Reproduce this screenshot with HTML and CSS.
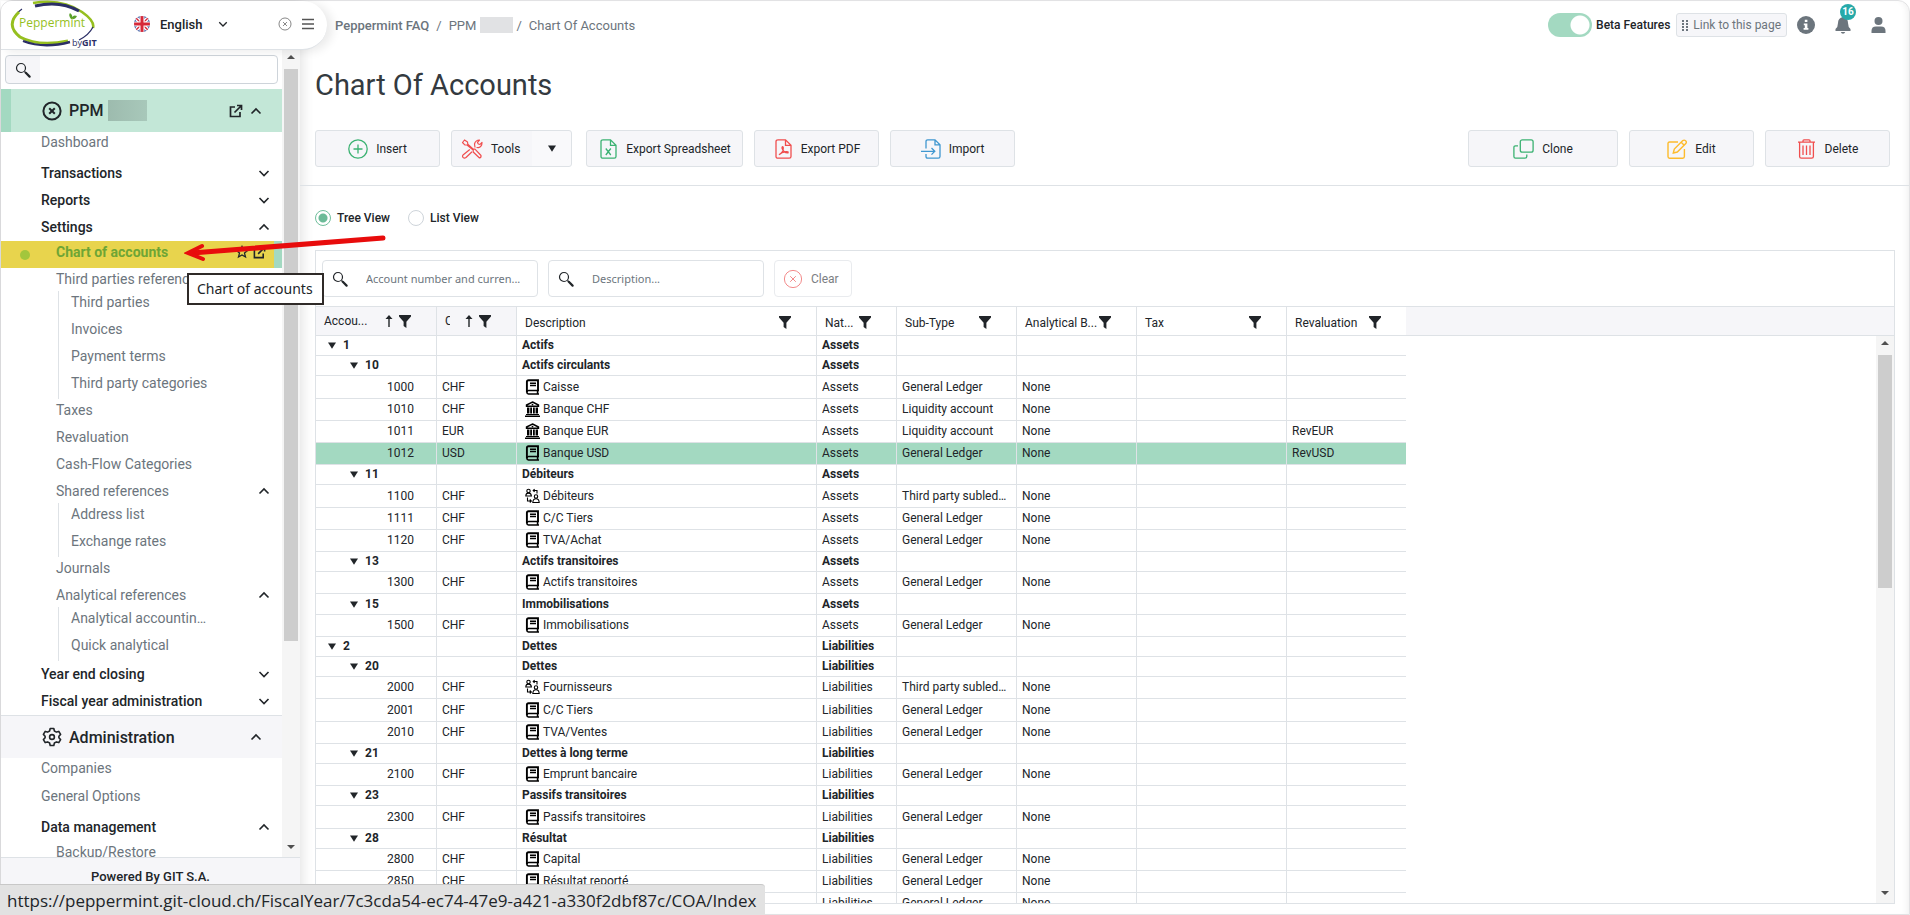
FILE: index.html
```html
<!DOCTYPE html>
<html lang="en">

<head>
  <meta charset="utf-8">
  <title>Chart Of Accounts</title>
  <link rel="stylesheet" href="styles.css">
</head>

<body>
  <svg class="sprite" aria-hidden="true">
    <symbol id="i-search" viewBox="0 0 16 16" fill="none" stroke="currentColor"><circle cx="6" cy="6" r="4.5" stroke-width="1.2"/><path d="M9.5 9.5L11 11" stroke-width="1.2"/><path d="M10.8 10.8L14.6 14.6" stroke-width="2.2" stroke-linecap="round"/></symbol>
    <symbol id="i-down" viewBox="0 0 12 12" fill="none" stroke="currentColor" stroke-width="1.6"><path d="M1.5 4L6 8.5L10.5 4"/></symbol>
    <symbol id="i-up" viewBox="0 0 12 12" fill="none" stroke="currentColor" stroke-width="1.6"><path d="M1.5 8.5L6 4L10.5 8.5"/></symbol>
    <symbol id="i-cx" viewBox="0 0 20 20" fill="none" stroke="currentColor"><circle cx="10" cy="10" r="8.6"/><path d="M7.2 7.2L12.8 12.8M12.8 7.2L7.2 12.8"/></symbol>
    <symbol id="i-ext" viewBox="0 0 14 14" fill="none" stroke="currentColor" stroke-width="1.7"><path d="M6 3H1.5V12.5H11V8M8 1.5H12.5V6M12.5 1.5L5.5 8.5"/></symbol>
    <symbol id="i-filter" viewBox="0 0 12 13"><path d="M0 0H12V1.5L7.4 6.8V13L4.6 11V6.8L0 1.5Z" fill="currentColor"/></symbol>
    <symbol id="i-sort" viewBox="0 0 8 12"><path d="M4 0L7.5 4H4.7V12H3.3V4H0.5Z" fill="currentColor"/></symbol>
    <symbol id="i-tri" viewBox="0 0 8 7"><path d="M0 0.5H8L4 6.8Z" fill="currentColor"/></symbol>
    <symbol id="i-book" viewBox="0 0 15 16" fill="none" stroke="#000"><path d="M13 11.5V1.2H3.5Q1.9 1.2 1.9 2.8V13.2" stroke-width="1.9"/><path d="M14 11.5H3.5Q1.9 11.5 1.9 13.2T3.5 15H14M12.6 11.5V15" stroke-width="1.6"/><path d="M5 4.2H11M5 6.6H11" stroke-width="1.5"/></symbol>
    <symbol id="i-bank" viewBox="0 0 15 16"><path d="M7.5 1L13.5 4V5.3H1.5V4Z" fill="none" stroke="#000" stroke-width="1.4"/><circle cx="7.5" cy="3.6" r="0.9"/><path d="M2 6.5H4.4V12.5H2ZM5.2 6.5H7V12.5H5.2ZM8 6.5H9.8V12.5H8ZM10.6 6.5H13V12.5H10.6ZM1 13H14V14H1ZM0 14.6H15V16H0Z"/></symbol>
    <symbol id="i-third" viewBox="0 0 15 15" fill="none" stroke="#000" stroke-width="1.1"><circle cx="3.5" cy="2.5" r="1.7"/><path d="M0.8 7.5Q0.8 4.6 3.5 4.6T6.4 7.5ZM12 5V2H8.2M9.6 0.6L8.2 2L9.6 3.4M2.5 9V12.5H6M4.8 11L6.3 12.5L4.8 14"/><circle cx="11" cy="8" r="1.7"/><path d="M7.8 14Q8 10.2 11 10.2T14.2 14Z"/></symbol>
  </svg>

  <div class="page">
    <aside class="sidebar">
      <header class="brand">
        <svg class="logo" viewBox="0 0 90 48" aria-label="Peppermint by GIT">
          <path d="M25 3Q54 -2 74 12Q87 21 85 28" fill="none" stroke="#96bf1f" stroke-width="2.6"/>
          <path d="M27 6Q52 0 71 11" fill="none" stroke="#2b2e66" stroke-width="3"/>
          <path d="M85 27Q81 35 71 40" fill="none" stroke="#2b2e66" stroke-width="1.2"/>
          <path d="M14 9Q7 14 5 20" fill="none" stroke="#2b2e66" stroke-width="1.2"/>
          <path d="M11 12Q-3 25 12 37Q30 47 60 41" fill="none" stroke="#96bf1f" stroke-width="3"/>
          <path d="M15 41Q36 49 62 42" fill="none" stroke="#2b2e66" stroke-width="2.4"/>
          <path d="M63 19Q60 15 62 13Q66 16 63 19Q65 14 69 16Q67 20 63 19" fill="#5aa02c"/>
          <text x="11" y="27" class="logo-name">Peppermint</text>
          <text x="64" y="46" class="logo-by">by<tspan class="logo-git">GIT</tspan></text>
        </svg>
        <button class="lang" type="button">
          <svg width="18" height="18" viewBox="0 0 18 18"><clipPath id="flag"><circle cx="9" cy="9" r="8"/></clipPath><g clip-path="url(#flag)"><path d="M0 0H18V18H0Z" fill="#1d3f94"/><path d="M0 0L18 18M18 0L0 18" stroke="#fff" stroke-width="4"/><path d="M0 0L18 18M18 0L0 18" stroke="#d62839" stroke-width="1.4"/><path d="M9 0V18M0 9H18" stroke="#fff" stroke-width="5"/><path d="M9 0V18M0 9H18" stroke="#d62839" stroke-width="3"/></g></svg>
          English
          <svg class="lang-arrow" width="10" height="10"><use href="#i-down"/></svg>
        </button>
        <button class="plain" type="button" aria-label="Close"><svg width="14" height="14"><use href="#i-cx"/></svg></button>
        <button class="plain" type="button" aria-label="Menu"><svg width="12" height="12" viewBox="0 0 12 12"><path d="M0 1.5H12M0 6H12M0 10.5H12" stroke="#555" stroke-width="1.6"/></svg></button>
      </header>

      <div class="nav-wrap">
        <nav class="nav">
          <label class="nav-search">
            <svg width="16" height="16"><use href="#i-search"/></svg>
            <input type="text" aria-label="Search menu">
          </label>

          <div class="nav-head active">
            <svg width="20" height="20" class="thick"><use href="#i-cx"/></svg>
            <span>PPM</span><i class="mask"></i>
            <svg class="push" width="14" height="14"><use href="#i-ext"/></svg>
            <svg width="12" height="12"><use href="#i-up"/></svg>
          </div>
          <a class="nav-link top" href="#">Dashboard</a>
          <a class="nav-group" href="#">Transactions<svg width="12" height="12"><use href="#i-down"/></svg></a>
          <a class="nav-group" href="#">Reports<svg width="12" height="12"><use href="#i-down"/></svg></a>
          <a class="nav-group" href="#">Settings<svg width="12" height="12"><use href="#i-up"/></svg></a>
          <a class="nav-link current" href="#"><i class="dot"></i>Chart of accounts
            <svg class="push" width="14" height="14" viewBox="0 0 14 14"><path d="M7 1.5L8.6 5.2L12.6 5.5L9.5 8.1L10.5 12L7 9.9L3.5 12L4.5 8.1L1.4 5.5L5.4 5.2Z" fill="none" stroke="currentColor" stroke-width="1.3"/></svg>
            <svg width="13" height="13"><use href="#i-ext"/></svg>
          </a>
          <a class="nav-link parent" href="#">Third parties references</a>
          <div class="nav-sub">
            <a class="nav-link" href="#">Third parties</a>
            <a class="nav-link" href="#">Invoices</a>
            <a class="nav-link" href="#">Payment terms</a>
            <a class="nav-link" href="#">Third party categories</a>
          </div>
          <a class="nav-link" href="#">Taxes</a>
          <a class="nav-link" href="#">Revaluation</a>
          <a class="nav-link" href="#">Cash-Flow Categories</a>
          <a class="nav-link parent" href="#">Shared references<svg width="12" height="12"><use href="#i-up"/></svg></a>
          <div class="nav-sub">
            <a class="nav-link" href="#">Address list</a>
            <a class="nav-link" href="#">Exchange rates</a>
          </div>
          <a class="nav-link" href="#">Journals</a>
          <a class="nav-link parent" href="#">Analytical references<svg width="12" height="12"><use href="#i-up"/></svg></a>
          <div class="nav-sub">
            <a class="nav-link" href="#">Analytical accountin…</a>
            <a class="nav-link" href="#">Quick analytical</a>
          </div>
          <a class="nav-group" href="#">Year end closing<svg width="12" height="12"><use href="#i-down"/></svg></a>
          <a class="nav-group" href="#">Fiscal year administration<svg width="12" height="12"><use href="#i-down"/></svg></a>
          <div class="nav-head">
            <svg width="20" height="20" viewBox="0 0 20 20" fill="none" stroke="currentColor" stroke-width="1.6"><path d="M8.2 1.5H11.8L12.4 4L14.4 5.1L16.8 4.4L18.6 7.4L16.9 9.2V10.8L18.6 12.6L16.8 15.6L14.4 14.9L12.4 16L11.8 18.5H8.2L7.6 16L5.6 14.9L3.2 15.6L1.4 12.6L3.1 10.8V9.2L1.4 7.4L3.2 4.4L5.6 5.1L7.6 4Z" stroke-linejoin="round"/><circle cx="10" cy="10" r="2.4"/></svg>
            <span>Administration</span>
            <svg class="push" width="12" height="12"><use href="#i-up"/></svg>
          </div>
          <a class="nav-link top" href="#">Companies</a>
          <a class="nav-link top" href="#">General Options</a>
          <a class="nav-group" href="#">Data management<svg width="12" height="12"><use href="#i-up"/></svg></a>
          <a class="nav-link" href="#">Backup/Restore</a>
        </nav>
        <div class="scrollbar"><i class="sb-up"></i><i class="sb-thumb nav-thumb"></i><i class="sb-down"></i></div>
      </div>
      <footer class="powered">Powered By GIT S.A.</footer>
    </aside>

    <main class="main">
      <div class="topbar">
        <div class="crumbs"><a class="strong" href="#">Peppermint FAQ</a><span>/</span><a href="#">PPM</a><i class="mask light"></i><span>/</span><a href="#">Chart Of Accounts</a></div>
        <div class="topbar-right">
          <label class="switch"><input type="checkbox" checked>Beta Features</label>
          <button class="page-link" type="button"><svg width="6" height="11" viewBox="0 0 6 11" fill="currentColor"><path d="M0 0h2v2H0zM4 0h2v2H4zM0 3h2v2H0zM4 3h2v2H4zM0 6h2v2H0zM4 6h2v2H4zM0 9h2v2H0zM4 9h2v2H4z"/></svg>Link to this page</button>
          <button class="plain" type="button" aria-label="Info"><svg width="18" height="18" viewBox="0 0 18 18"><circle cx="9" cy="9" r="9" fill="#6c757d"/><path d="M7.8 3.8H10.4V6H7.8ZM6.8 7.5H10.4V12H11.4V13.8H6.6V12H7.8V9.2H6.8Z" fill="#fff"/></svg></button>
          <button class="plain bell" type="button" aria-label="Notifications"><svg width="16" height="18" viewBox="0 0 16 18" fill="#6c757d"><path d="M8 1Q3 2 3 7Q3 11 0.5 13V15H15.5V13Q13 11 13 7Q13 2 8 1ZM5.8 16H10.2Q9.6 17.8 8 17.8T5.8 16Z"/></svg><span class="badge">16</span></button>
          <button class="plain" type="button" aria-label="User"><svg width="15" height="16" viewBox="0 0 15 16" fill="#6c757d"><circle cx="7.5" cy="4" r="4"/><path d="M0.5 16V14Q0.5 9.6 5 9.6H10Q14.5 9.6 14.5 14V16Z"/></svg></button>
        </div>
      </div>

      <h1>Chart Of Accounts</h1>

      <div class="toolbar">
        <button class="btn" type="button"><svg class="green" width="20" height="20" viewBox="0 0 20 20" fill="none" stroke="currentColor" stroke-width="1.3"><circle cx="10" cy="10" r="9.2"/><path d="M10 5.5V14.5M5.5 10H14.5"/></svg>Insert</button>
        <button class="btn tools" type="button"><svg class="red" width="22" height="20" viewBox="0 0 22 20" fill="none" stroke="currentColor" stroke-width="1.2" stroke-linejoin="round"><path d="M1.5 3.5L3.5 1L6.5 3L6.8 5.2L12 10L14 10.2L20 16.5Q20.4 18.4 18.5 19L12.2 13V11L6 6L3.8 5.8Z"/><path d="M14 8.5L13.5 5Q14.5 1.2 18.5 1L16.5 3.4L17.3 5L19 5.4L21 3.4Q21 7.5 17.5 8.6L15.5 8.5M8.8 10.5L2 16Q1 17.6 2.2 18.6T5 18.5L11 12.8"/></svg>Tools<svg class="caret" width="8" height="7"><use href="#i-tri"/></svg></button>
        <button class="btn wide" type="button"><svg class="green" width="20" height="20" viewBox="-2 0 20 20" fill="none" stroke="currentColor" stroke-width="1.3"><path d="M3 0.8H10.5L16 6.3V17.5Q16 19.2 14.3 19.2H3Q1 19.2 1 17.5V2.5Q1 0.8 3 0.8ZM10.5 1V6.3H16M5.8 9.5L10.8 16M10.8 9.5L5.8 16"/></svg>Export Spreadsheet</button>
        <button class="btn" type="button"><svg class="red" width="20" height="20" viewBox="-2 0 20 20" fill="none" stroke="currentColor" stroke-width="1.3"><path d="M3 0.8H10.5L16 6.3V17.5Q16 19.2 14.3 19.2H3Q1 19.2 1 17.5V2.5Q1 0.8 3 0.8ZM10.5 1V6.3H16M4 15.8Q9 13 8.2 8.2Q7.2 7 7 9Q8.5 14 13 13.8Q13.8 12.4 11 12.6Q6.5 13.2 4 15.8"/></svg>Export PDF</button>
        <button class="btn" type="button"><svg class="blue" width="20" height="20" viewBox="0 0 20 20" fill="none" stroke="currentColor" stroke-width="1.3"><path d="M5 9.5V2.5Q5 0.8 6.7 0.8H14L19 5.8V17.5Q19 19.2 17.3 19.2H6.7Q5 19.2 5 17.5V15M14 1V5.8H19M0 12.3H13.5M10.5 9L13.8 12.3L10.5 15.6"/></svg>Import</button>
        <div class="toolbar-end">
          <button class="btn big" type="button"><svg class="green" width="21" height="20" viewBox="0 0 21 20" fill="none" stroke="currentColor" stroke-width="1.3"><rect x="7.3" y="0.8" width="12.8" height="12.4" rx="2"/><path d="M5 6.8H2.5Q0.9 6.8 0.9 8.5V17.5Q0.9 19.2 2.5 19.2H12Q13.8 19.2 13.8 17.5V15.5"/></svg>Clone</button>
          <button class="btn" type="button"><svg class="amber" width="20" height="20" viewBox="0 0 20 20" fill="none" stroke="currentColor" stroke-width="1.4"><path d="M11 3H2.5Q1 3 1 4.6V17.6Q1 19.2 2.5 19.2H15.8Q17.4 19.2 17.4 17.6V10M6.3 14L7.3 10L15.8 1.6Q17.2 0.6 18.6 1.8T18.8 4.6L10.3 13Z"/><path d="M14.2 3.2L17.2 6.2"/></svg>Edit</button>
          <button class="btn" type="button"><svg class="red" width="20" height="20" viewBox="-1 0 20 20" fill="none" stroke="currentColor" stroke-width="1.3"><path d="M0 3.2H17M5 3V1.8Q5 0.8 6 0.8H11Q12 0.8 12 1.8V3M1.6 3.2V17.5Q1.6 19.2 3.3 19.2H13.7Q15.4 19.2 15.4 17.5V3.2M5 6.5V16M8.5 6.5V16M12 6.5V16"/></svg>Delete</button>
        </div>
      </div>

      <div class="views">
        <label><input type="radio" name="view" checked>Tree View</label>
        <label><input type="radio" name="view">List View</label>
      </div>

      <section class="grid">
        <div class="grid-filters">
          <label class="filter"><svg width="16" height="16"><use href="#i-search"/></svg><input type="text" placeholder="Account number and curren..." aria-label="Account number and currency"></label>
          <label class="filter"><svg width="16" height="16"><use href="#i-search"/></svg><input type="text" placeholder="Description..." aria-label="Description"></label>
          <button class="clear" type="button"><svg width="20" height="20"><use href="#i-cx"/></svg>Clear</button>
        </div>
        <div class="grid-head">
          <table>
            <colgroup><col class="c120"><col class="c80"><col class="c300"><col class="c80"><col class="c120"><col class="c120"><col class="c150"><col class="c120"></colgroup>
            <thead>
              <tr>
                <th class="sorted"><div><span>Accou...</span><svg width="8" height="12"><use href="#i-sort"/></svg><svg width="12" height="13"><use href="#i-filter"/></svg></div></th>
                <th class="sorted clip"><div><span>C</span><svg width="8" height="12"><use href="#i-sort"/></svg><svg width="12" height="13"><use href="#i-filter"/></svg></div></th>
                <th><div><span>Description</span><svg width="12" height="13"><use href="#i-filter"/></svg></div></th>
                <th><div><span>Nat...</span><svg width="12" height="13"><use href="#i-filter"/></svg></div></th>
                <th><div><span>Sub-Type</span><svg width="12" height="13"><use href="#i-filter"/></svg></div></th>
                <th><div><span>Analytical B...</span><svg width="12" height="13"><use href="#i-filter"/></svg></div></th>
                <th><div><span>Tax</span><svg width="12" height="13"><use href="#i-filter"/></svg></div></th>
                <th><div><span>Revaluation</span><svg width="12" height="13"><use href="#i-filter"/></svg></div></th>
              </tr>
            </thead>
          </table>
        </div>
        <div class="grid-body">
          <div class="grid-rows">
            <table>
              <colgroup><col class="c120"><col class="c80"><col class="c300"><col class="c80"><col class="c120"><col class="c120"><col class="c150"><col class="c120"></colgroup>
              <tbody id="rows"></tbody>
            </table>
          </div>
          <div class="scrollbar"><i class="sb-up"></i><i class="sb-thumb grid-thumb"></i><i class="sb-down"></i></div>
        </div>
      </section>
    </main>
  </div>

  <div class="tooltip" role="tooltip">Chart of accounts</div>
  <svg class="pointer" width="204" height="32" viewBox="0 0 204 32" fill="none" stroke="#e80c0c" stroke-linecap="round"><path d="M8 20L199 5" stroke-width="5"/><path d="M18 13L4 20L19 26" stroke-width="4"/></svg>
  <div class="status">https://peppermint.git-cloud.ch/FiscalYear/7c3cda54-ec74-47e9-a421-a330f2dbf87c/COA/Index</div>

  <script>
    // [level, number, currency, description, nature, sub-type, icon, revaluation]
    const GL = 'General Ledger', LQ = 'Liquidity account', TP = 'Third party subledger';
    const accounts = [
      [0, '1', '', 'Actifs', 'Assets'],
      [1, '10', '', 'Actifs circulants', 'Assets'],
      [2, '1000', 'CHF', 'Caisse', 'Assets', GL, 'book'],
      [2, '1010', 'CHF', 'Banque CHF', 'Assets', LQ, 'bank'],
      [2, '1011', 'EUR', 'Banque EUR', 'Assets', LQ, 'bank', 'RevEUR'],
      [2, '1012', 'USD', 'Banque USD', 'Assets', GL, 'book', 'RevUSD'],
      [1, '11', '', 'Débiteurs', 'Assets'],
      [2, '1100', 'CHF', 'Débiteurs', 'Assets', TP, 'third'],
      [2, '1111', 'CHF', 'C/C Tiers', 'Assets', GL, 'book'],
      [2, '1120', 'CHF', 'TVA/Achat', 'Assets', GL, 'book'],
      [1, '13', '', 'Actifs transitoires', 'Assets'],
      [2, '1300', 'CHF', 'Actifs transitoires', 'Assets', GL, 'book'],
      [1, '15', '', 'Immobilisations', 'Assets'],
      [2, '1500', 'CHF', 'Immobilisations', 'Assets', GL, 'book'],
      [0, '2', '', 'Dettes', 'Liabilities'],
      [1, '20', '', 'Dettes', 'Liabilities'],
      [2, '2000', 'CHF', 'Fournisseurs', 'Liabilities', TP, 'third'],
      [2, '2001', 'CHF', 'C/C Tiers', 'Liabilities', GL, 'book'],
      [2, '2010', 'CHF', 'TVA/Ventes', 'Liabilities', GL, 'book'],
      [1, '21', '', 'Dettes à long terme', 'Liabilities'],
      [2, '2100', 'CHF', 'Emprunt bancaire', 'Liabilities', GL, 'book'],
      [1, '23', '', 'Passifs transitoires', 'Liabilities'],
      [2, '2300', 'CHF', 'Passifs transitoires', 'Liabilities', GL, 'book'],
      [1, '28', '', 'Résultat', 'Liabilities'],
      [2, '2800', 'CHF', 'Capital', 'Liabilities', GL, 'book'],
      [2, '2850', 'CHF', 'Résultat reporté', 'Liabilities', GL, 'book'],
      [2, '2900', 'CHF', 'Résultat', 'Liabilities', GL, 'book']
    ];

    document.getElementById('rows').innerHTML = accounts.map(([level, num, cur, desc, nature, type, icon, rev]) => {
      const leaf = level === 2;
      const caret = leaf ? '' : '<svg width="8" height="7"><use href="#i-tri"/></svg>';
      const ic = leaf ? `<svg width="15" height="16"><use href="#i-${icon}"/></svg>` : '';
      return `<tr class="${leaf ? 'leaf' : 'group'} ${num === '1012' ? 'selected' : ''}">
        <td class="level-${level}">${caret}${num}</td><td>${cur}</td><td class="desc">${ic}${desc}</td><td>${nature}</td>
        <td>${type || ''}</td><td>${leaf ? 'None' : ''}</td><td></td><td>${rev || ''}</td></tr>`;
    }).join('');
  </script>
</body>

</html>
```

FILE: styles.css
```css
* {
  box-sizing: border-box;
}

body {
  margin: 0;
  height: 100vh;
  overflow: hidden;
  font-family: Roboto, "Liberation Sans", sans-serif;
  font-size: 14px;
  color: #212529;
  background: #fff;
}

a {
  color: inherit;
  text-decoration: none;
}

button,
input {
  font: inherit;
  color: inherit;
}

svg {
  flex: none;
}

.sprite {
  position: absolute;
  width: 0;
  height: 0;
}

.page {
  display: flex;
  height: 100vh;
  border: 1px solid #e2e2e4;
  border-radius: 12px 12px 0 0;
  box-shadow: inset -6px 0 6px -4px rgba(0, 0, 0, 0.06);
}

.plain {
  display: flex;
  padding: 0;
  border: 0;
  background: none;
  color: #555;
}

.push {
  margin-left: auto;
}

/* sidebar */
.sidebar {
  display: flex;
  flex-direction: column;
  flex: none;
  width: 299px;
  box-shadow: 2px 0 12px rgba(0, 0, 0, 0.12);
}

.brand {
  display: flex;
  align-items: center;
  width: 326px;
  height: 49px;
  padding: 0 13px 2px 7px;
  gap: 10px;
  flex: none;
  background: #fff;
  border-bottom: 1px solid #dee2e6;
  border-radius: 12px 25px 25px 0;
  box-shadow: 6px 2px 10px rgba(0, 0, 0, 0.08);
  z-index: 1;
}

.logo {
  width: 90px;
  height: 48px;
}

.logo-name {
  font: 500 12px "Open Sans", sans-serif;
  fill: #96bf1f;
}

.logo-by {
  font: 9px "Open Sans", sans-serif;
  fill: #2b2e66;
}

.logo-git {
  font-weight: 700;
}

.lang {
  display: flex;
  align-items: center;
  gap: 9px;
  margin-left: 25px;
  margin-right: auto;
  padding: 0;
  border: 0;
  background: none;
  font-size: 13px;
  font-weight: 500;
}

.lang-arrow {
  margin-left: 6px;
}

.nav-wrap {
  display: flex;
  flex: 1;
  min-height: 0;
  background: #fff;
}

.nav {
  flex: 1;
  min-width: 0;
  overflow: hidden;
}

.nav-search {
  display: flex;
  align-items: center;
  height: 29px;
  margin: 5px 4px;
  padding-left: 9px;
  border: 1px solid #ced4da;
  border-radius: 4px;
  background: linear-gradient(to right, #f6f6f9 34px, #fff 34px);
}

.nav-search input {
  flex: 1;
  min-width: 0;
  border: 0;
  outline: 0;
  background: none;
}

.nav-head {
  display: flex;
  align-items: center;
  height: 43px;
  padding: 0 20px 0 41px;
  border-top: 1px solid #dee2e6;
  background: #f6f6f9;
  font-size: 16px;
  font-weight: 500;
}

.nav-head span {
  margin-left: 7px;
}

.nav-head.active {
  padding-left: 31px;
  border-top: 0;
  border-left: 10px solid #a3d9c1;
  background: #c3e7d7;
}

.nav-head.active .push {
  margin-right: 7px;
}

.thick {
  stroke-width: 2;
}

.mask {
  width: 39px;
  height: 21px;
  margin-left: 5px;
  background: linear-gradient(to right, #9dbbae, #a8c8ba);
}

.nav-group {
  display: flex;
  align-items: center;
  justify-content: space-between;
  height: 27px;
  padding: 0 12px 2px 40px;
  font-weight: 500;
}

.nav-link {
  display: flex;
  align-items: center;
  justify-content: space-between;
  line-height: 22px;
  padding: 0 12px 5px 55px;
  color: #6c757d;
}

.nav-link svg {
  color: #212529;
}

.nav-link.top {
  line-height: 20px;
  padding-left: 40px;
  padding-bottom: 8px;
}

.nav-link.parent {
  padding-bottom: 1px;
}

.nav-link.current {
  justify-content: flex-start;
  gap: 4px;
  padding-left: 19px;
  padding-right: 8px;
  border-right: 8px solid #a3d9c1;
  background: #e8d44d;
  color: #6ea535;
  font-weight: 700;
}

.dot {
  width: 10px;
  height: 10px;
  margin: 5px 22px 0 0;
  border-radius: 50%;
  background: #a3c63c;
}

.nav-sub {
  margin-left: 57px;
  border-left: 1px solid #dee2e6;
}

.nav-sub .nav-link {
  padding-left: 12px;
}

.powered {
  height: 57px;
  padding-top: 10px;
  border-top: 1px solid #dee2e6;
  background: #f6f6f9;
  font-size: 13px;
  font-weight: 500;
  line-height: 18px;
  text-align: center;
}

/* scrollbars */
.scrollbar {
  display: flex;
  flex-direction: column;
  align-items: center;
  flex: none;
  width: 18px;
  padding: 5px 0 8px;
  background: #f5f5f5;
}

.sb-up,
.sb-down {
  border: 4px solid transparent;
}

.sb-up {
  border-top: 0;
  border-bottom-color: #505050;
  margin-bottom: 10px;
}

.sb-down {
  border-bottom: 0;
  border-top-color: #505050;
  margin-top: auto;
}

.sb-thumb {
  width: 14px;
  background: #cdcdcd;
}

.nav-thumb {
  height: 72%;
}

.grid-thumb {
  height: 42%;
}

/* main */
.main {
  display: flex;
  flex-direction: column;
  flex: 1;
  min-width: 0;
  padding-bottom: 10px;
}

.topbar {
  display: flex;
  align-items: center;
  justify-content: space-between;
  height: 48px;
  padding: 0 23px 0 35px;
  color: #6c757d;
}

.crumbs {
  display: flex;
  align-items: center;
  gap: 7px;
  font-size: 13px;
}

.crumbs .strong {
  font-weight: 500;
}

.mask.light {
  width: 33px;
  height: 16px;
  margin: 0 -4px 0 -3px;
  background: #e1e2e4;
}

.topbar-right {
  display: flex;
  align-items: center;
  gap: 10px;
  font-size: 12px;
}

.switch {
  display: flex;
  align-items: center;
  gap: 4px;
  margin-right: -4px;
  color: #212529;
  font-weight: 500;
}

.switch input {
  appearance: none;
  width: 44px;
  height: 24px;
  margin: 0;
  border-radius: 12px;
  background: radial-gradient(circle at 32px 12px, #fff 9px, #a3d9c1 10px);
}

.page-link {
  display: flex;
  align-items: center;
  gap: 5px;
  height: 24px;
  padding: 0 5px;
  border: 1px solid #dee2e6;
  border-radius: 3px;
  background: #f6f6f9;
}

.bell {
  position: relative;
  margin: 0 10px;
}

.badge {
  position: absolute;
  top: -12px;
  right: -5px;
  width: 16px;
  height: 16px;
  border-radius: 50%;
  background: #26a9a9;
  color: #fff;
  font-size: 10px;
  font-weight: 700;
  line-height: 16px;
  text-align: center;
}

h1 {
  margin: 0;
  padding: 16px 15px 0;
  font-size: 29px;
  font-weight: 400;
  line-height: 40px;
  color: #343a40;
}

.toolbar {
  display: flex;
  gap: 11px;
  margin-top: 25px;
  padding: 0 19px 18px 15px;
  border-bottom: 1px solid #dee2e6;
}

.toolbar-end {
  display: flex;
  gap: 11px;
  margin-left: auto;
}

.btn {
  display: flex;
  align-items: center;
  justify-content: center;
  gap: 8px;
  width: 125px;
  height: 37px;
  padding: 0;
  border: 1px solid #dee2e6;
  border-radius: 3px;
  background: #f6f6f9;
  font-size: 12px;
}

.btn.tools {
  justify-content: flex-start;
  width: 121px;
  margin-right: 3px;
  padding-left: 9px;
  background: linear-gradient(to right, #f6f6f9 80px, #f9f9fb 80px);
}

.btn.wide {
  width: 157px;
}

.btn.big {
  width: 150px;
}

.caret {
  margin-left: 20px;
}

.green {
  color: #3bb272;
}

.red {
  color: #f04e4e;
}

.blue {
  color: #3f97d0;
}

.amber {
  color: #fdbb2d;
}

.views {
  display: flex;
  gap: 18px;
  padding: 23px 15px;
  font-size: 12px;
  font-weight: 500;
  line-height: 18px;
}

.views label {
  display: flex;
  align-items: center;
  gap: 6px;
}

.views input {
  appearance: none;
  width: 16px;
  height: 16px;
  margin: 0;
  border: 1px solid #ced4da;
  border-radius: 50%;
}

.views input:checked {
  border-color: #6fbe9b;
  background: radial-gradient(circle, #6cbb98 4px, #fff 5px);
}

/* grid */
.grid {
  display: flex;
  flex-direction: column;
  flex: 1;
  min-height: 0;
  margin: 0 14px 0 15px;
  border: 1px solid #dee2e6;
  font-size: 12px;
}

.grid-filters {
  display: flex;
  gap: 10px;
  padding: 9px 6px;
}

.filter {
  display: flex;
  align-items: center;
  gap: 18px;
  width: 216px;
  height: 37px;
  padding-left: 9px;
  border: 1px solid #dee2e6;
  border-radius: 4px;
}

.filter input {
  flex: 1;
  min-width: 0;
  padding: 0;
  border: 0;
  outline: 0;
  font-family: "Noto Sans", sans-serif;
  font-size: 11px;
}

.filter input::placeholder {
  color: #6c757d;
}

.clear {
  display: flex;
  align-items: center;
  gap: 8px;
  width: 78px;
  height: 37px;
  padding: 0 8px;
  border: 1px solid #e9ebee;
  border-radius: 4px;
  background: #fff;
  color: #7b7e82;
}

.clear svg {
  color: #f38b8b;
}

.grid-head {
  border-top: 1px solid #dee2e6;
  border-bottom: 1px solid #dee2e6;
  background: #f6f6f9;
}

table {
  width: 1090px;
  table-layout: fixed;
  border-collapse: separate;
  border-spacing: 0;
}

.c80 {
  width: 80px;
}

.c120 {
  width: 120px;
}

.c150 {
  width: 150px;
}

.c300 {
  width: 300px;
}

th {
  height: 28px;
  padding: 3px 25px 0 8px;
  border-left: 1px solid #dee2e6;
  background: #fff;
  font-weight: 400;
  text-align: left;
}

th:first-child,
td:first-child {
  border-left: 0;
}

th div {
  display: flex;
  align-items: center;
  gap: 3px;
}

th span {
  flex: 1;
  min-width: 0;
  white-space: nowrap;
}

th.sorted {
  padding-top: 0;
  background: #f6f6f9;
}

th.sorted div {
  gap: 6px;
}

th.clip span {
  overflow: hidden;
  flex: none;
  width: 5px;
  margin-right: 9px;
}

.grid-body {
  display: flex;
  flex: 1;
  min-height: 0;
}

.grid-rows {
  flex: 1;
  min-width: 0;
  overflow: hidden;
}

td {
  height: 22px;
  padding: 0 8px 1px 5px;
  border-left: 1px solid #dee2e6;
  border-bottom: 1px solid #dee2e6;
  line-height: 18px;
  overflow: hidden;
  text-overflow: ellipsis;
  white-space: nowrap;
}

.group td {
  height: 20px;
  font-weight: 700;
}

tr:nth-child(5n+3) td {
  height: 23px;
}

tr.group:nth-child(5n+3) td {
  height: 21px;
}

.selected td {
  background: #a3d9c1;
}

td svg {
  margin-right: 7px;
}

td.level-0 {
  padding-left: 12px;
}

td.level-1 {
  padding-left: 34px;
}

td.level-2 {
  padding-left: 71px;
}

.leaf .desc {
  padding-left: 8px;
}

.desc svg {
  margin-right: 3px;
  vertical-align: -4px;
}

/* overlays */
.tooltip {
  position: absolute;
  left: 187px;
  top: 273px;
  padding: 4px 9px 4px 8px;
  border: 2px solid #2f2a28;
  background: #fff;
  font: 14px/20px "Noto Sans", sans-serif;
}

.pointer {
  position: absolute;
  left: 184px;
  top: 233px;
}

.status {
  position: absolute;
  left: 0;
  bottom: 0;
  height: 31px;
  padding: 0 9px 0 7px;
  border-top: 1px solid #c8c8c8;
  border-radius: 0 4px 0 0;
  background: #e2e2e2;
  font: 17px/32px "Open Sans", sans-serif;
}
```
